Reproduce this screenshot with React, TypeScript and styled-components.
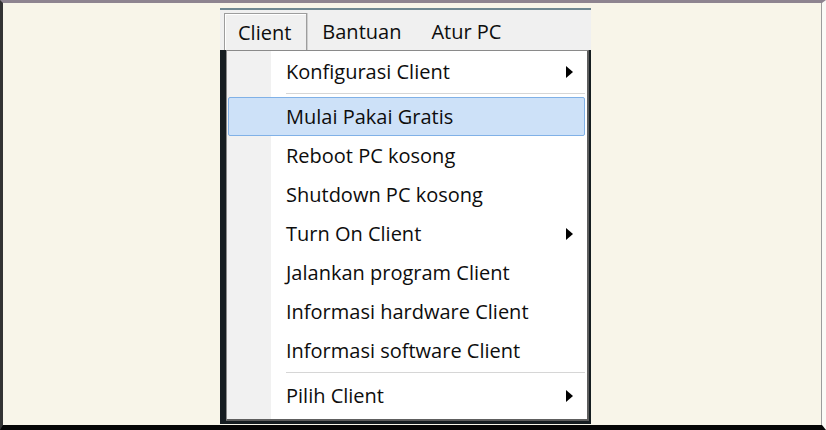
import React from 'react';
import styled, { createGlobalStyle } from 'styled-components';

const GlobalStyle = createGlobalStyle`
  body {
    margin: 0;
    background: #f8f5e9;
    font-family: 'Open Sans', 'Noto Sans', sans-serif;
  }
`;

const Frame = styled.div`
  width: 826px;
  height: 430px;
  box-sizing: border-box;
  background: #f8f5e9;
  border-top: 3px solid #8e8490;
  border-left: 3px solid #333;
  border-bottom: 5px solid #060606;
  border-right: 4px solid #fbfaf6;
  box-shadow: inset -1px 0 0 #9c9c9c;
  padding: 5px 0 0 217px;
  display: flex;
  align-items: flex-start;
`;

const Shot = styled.div`
  width: 371px;
  height: 416px;
  box-sizing: border-box;
  display: flex;
  flex-direction: column;
  background: #161d21;
  border-top: 2px solid #6f8891;
`;

const MenuBar = styled.div`
  height: 40px;
  flex: none;
  display: flex;
  align-items: flex-end;
  padding-left: 4px;
  background: #f0f0f0;
`;

const BarItem = styled.div<{ $open?: boolean }>`
  height: 37px;
  display: flex;
  align-items: center;
  box-sizing: border-box;
  padding: 0 15px;
  font-size: 20px;
  color: #0d0d0d;
  ${(p) =>
    p.$open &&
    `
    padding: 0 15px 0 13px;
    border: 1px solid #9d9d9d;
    border-bottom: none;
    box-shadow: inset 1px 1px 0 #fff, 1px 0 0 #cfcfcf;
  `}
`;

const Body = styled.div`
  flex: 1;
  display: flex;
  padding: 0 2px 3px 6px;
`;

const Dropdown = styled.div`
  flex: 1;
  box-sizing: border-box;
  border: 1px solid #8a8a8a;
  border-right: 2px solid #5e5e5e;
  border-bottom: 2px solid #5e5e5e;
  background: linear-gradient(to right, #f1f1f1 44px, #fff 44px);
  padding: 1px 2px 4px 1px;
  display: flex;
  flex-direction: column;
`;

const Item = styled.div<{ $hot?: boolean }>`
  height: 39px;
  flex: none;
  box-sizing: border-box;
  display: flex;
  align-items: center;
  padding-left: 57px;
  border: 1px solid transparent;
  border-radius: 2px;
  font-size: 20px;
  color: #0d0d0d;
  white-space: nowrap;
  ${(p) => p.$hot && 'background: #cde1f8; border-color: #80b1e7;'}
`;

const Arrow = styled.span`
  margin-left: auto;
  margin-right: 11px;
  width: 0;
  height: 0;
  border-left: 7px solid #000;
  border-top: 6.5px solid transparent;
  border-bottom: 6.5px solid transparent;
`;

const Separator = styled.div`
  height: 6px;
  flex: none;
  display: flex;
  align-items: center;
  padding-left: 58px;

  &::after {
    content: '';
    flex: 1;
    border-top: 1px solid #d6d6d6;
    border-bottom: 1px solid #fff;
  }
`;

type Entry = { label: string; sub?: boolean; hot?: boolean } | 'sep';

const entries: Entry[] = [
  { label: 'Konfigurasi Client', sub: true },
  'sep',
  { label: 'Mulai Pakai Gratis', hot: true },
  { label: 'Reboot PC kosong' },
  { label: 'Shutdown PC kosong' },
  { label: 'Turn On Client', sub: true },
  { label: 'Jalankan program Client' },
  { label: 'Informasi hardware Client' },
  { label: 'Informasi software Client' },
  'sep',
  { label: 'Pilih Client', sub: true },
];

export default function App() {
  return (
    <>
      <GlobalStyle />
      <Frame>
        <Shot>
          <MenuBar>
            <BarItem $open>Client</BarItem>
            <BarItem>Bantuan</BarItem>
            <BarItem>Atur PC</BarItem>
          </MenuBar>
          <Body>
            <Dropdown>
              {entries.map((e, i) =>
                e === 'sep' ? (
                  <Separator key={i} />
                ) : (
                  <Item key={i} $hot={e.hot}>
                    {e.label}
                    {e.sub && <Arrow />}
                  </Item>
                )
              )}
            </Dropdown>
          </Body>
        </Shot>
      </Frame>
    </>
  );
}
